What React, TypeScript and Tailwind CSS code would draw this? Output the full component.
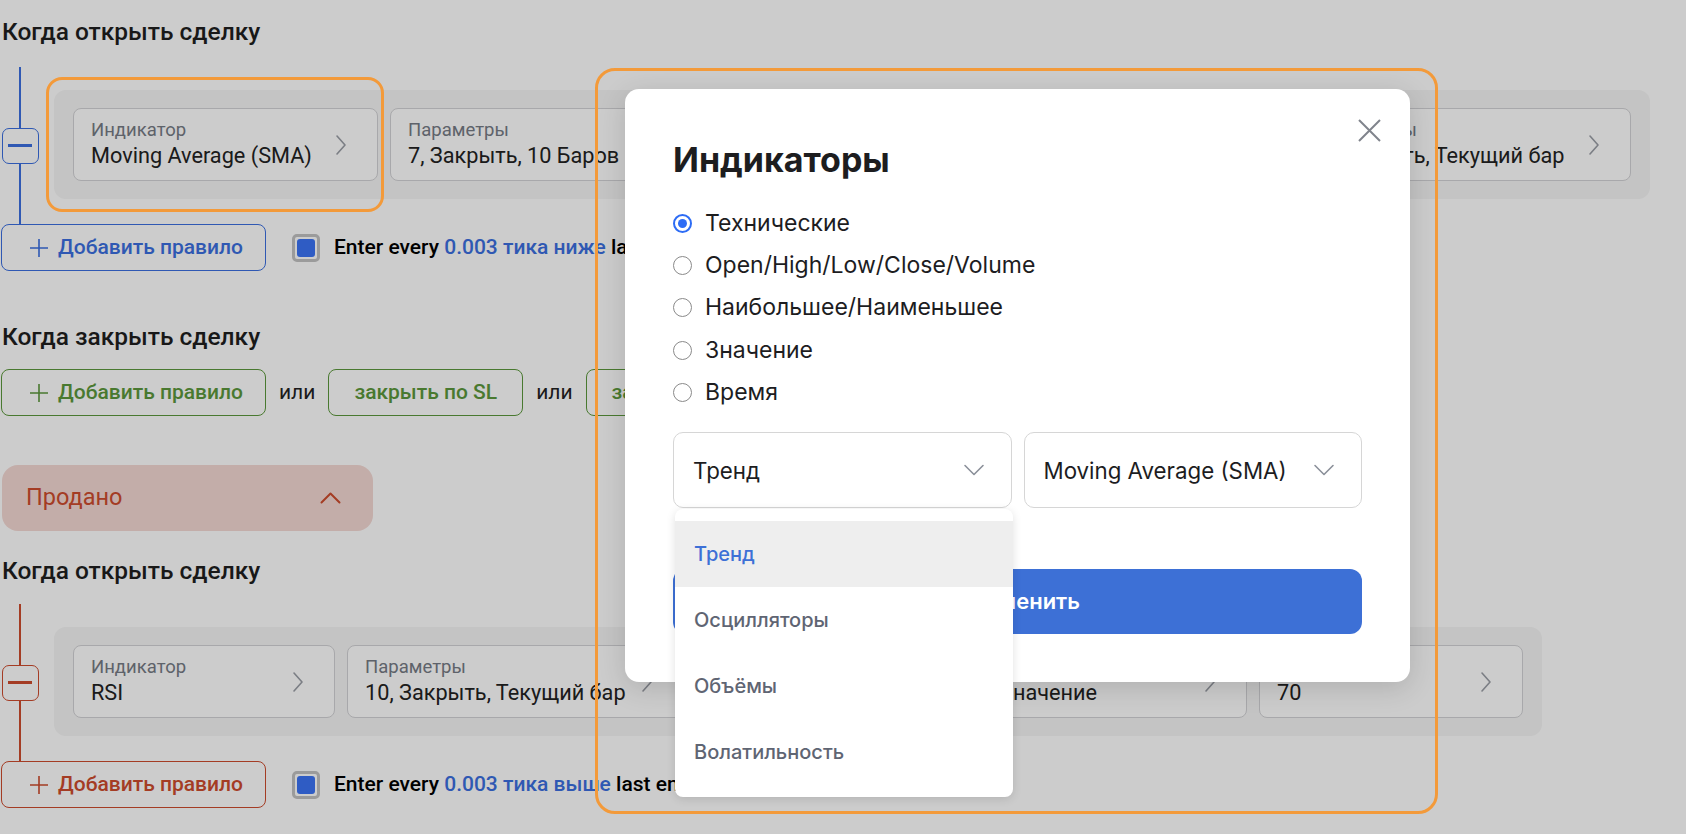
import React from "react";

type Card = { label: string; value: string; w: string };

const topCards: Card[] = [
  { label: "Индикатор", value: "Moving Average (SMA)", w: "w-[305px]" },
  { label: "Параметры", value: "7, Закрыть, 10 Баров", w: "w-[298px]" },
  { label: "Условие", value: "Пересекает вверх", w: "w-[284px]" },
  { label: "Индикатор", value: "Moving Average (SMA)", w: "w-[290px]" },
  { label: "Параметры", value: "7, Закрыть, Текущий бар", w: "w-[333px]" },
];

const bottomCards: Card[] = [
  { label: "Индикатор", value: "RSI", w: "w-[262px]" },
  { label: "Параметры", value: "10, Закрыть, Текущий бар", w: "w-[337px]" },
  { label: "Условие", value: "Больше чем", w: "w-[274px]" },
  { label: "Сравнить с", value: "Значение", w: "w-[265px]" },
  { label: "Значение", value: "70", w: "w-[264px]" },
];

const tones = {
  blue: {
    line: "bg-[#3b6fe0]",
    border: "border-[#3b6fe0]",
    text: "text-[#3b6fe0]",
    stroke: "#3b6fe0",
  },
  red: {
    line: "bg-[#cd4b2d]",
    border: "border-[#cd4b2d]",
    text: "text-[#cd4b2d]",
    stroke: "#cd4b2d",
  },
  green: {
    line: "bg-[#5c983c]",
    border: "border-[#5c983c]",
    text: "text-[#5c983c]",
    stroke: "#5c983c",
  },
};

type Tone = keyof typeof tones;

function ChevronRight() {
  return (
    <svg width="12" height="22" viewBox="0 0 12 22" fill="none" className="shrink-0">
      <path d="M2 2l8 9-8 9" stroke="#9a9ea6" strokeWidth="1.6" strokeLinecap="round" strokeLinejoin="round" />
    </svg>
  );
}

function Plus({ color }: { color: string }) {
  return (
    <svg width="20" height="20" viewBox="0 0 20 20" fill="none">
      <path d="M10 1v18M1 10h18" stroke={color} strokeWidth="1.6" />
    </svg>
  );
}

function RuleCard({ card }: { card: Card }) {
  return (
    <div
      className={`${card.w} flex h-[73px] shrink-0 items-center justify-between gap-[8px] rounded-[8px] border border-[#d3d3d6] bg-white pr-[30px] pl-[17px]`}
    >
      <div className="flex min-w-0 flex-col gap-[3px]">
        <span className="overflow-hidden text-[18.5px] leading-[20px] whitespace-nowrap text-[#767b85]">{card.label}</span>
        <span className="overflow-hidden text-[21.7px] leading-[26px] whitespace-nowrap text-[#222]">{card.value}</span>
      </div>
      <ChevronRight />
    </div>
  );
}

function RuleBlock({ tone, cards }: { tone: Tone; cards: Card[] }) {
  const t = tones[tone];
  return (
    <div className="flex items-stretch">
      <div className="flex w-[38px] shrink-0 flex-col items-center">
        <div className={`w-[2px] flex-1 ${t.line}`} />
        <div className={`flex h-[36px] w-[37px] items-center justify-center rounded-[7px] border ${t.border} bg-white`}>
          <div className={`h-[3px] w-[24px] ${t.line}`} />
        </div>
        <div className={`w-[2px] flex-1 ${t.line}`} />
      </div>
      <div className="ml-[15px] pt-[23px] pb-[25px]">
        <div className="flex gap-[12px] rounded-[12px] bg-[#f5f5f5] px-[19px] py-[18px]">
          {cards.map((c, i) => (
            <RuleCard key={i} card={c} />
          ))}
        </div>
      </div>
    </div>
  );
}

function AddButton({ tone }: { tone: Tone }) {
  const t = tones[tone];
  return (
    <button
      type="button"
      className={`flex h-[47px] w-[265px] shrink-0 items-center gap-[9px] rounded-[8px] border ${t.border} bg-white pl-[27px] text-[21px] font-medium ${t.text}`}
    >
      <Plus color={t.stroke} />
      Добавить правило
    </button>
  );
}

function AddRow({ tone, dir }: { tone: Tone; dir: string }) {
  return (
    <div className="flex h-[47px] items-center">
      <AddButton tone={tone} />
      <div className="ml-[26px] flex h-[28px] w-[28px] items-center justify-center rounded-[5px] border-[3px] border-[#c2c2c2] bg-white">
        <div className="h-[18px] w-[18px] rounded-[3px] bg-[#3b74f5]" />
      </div>
      <p className="ml-[14px] text-[21px] font-medium whitespace-nowrap text-black">
        Enter every <span className="text-[#3b6fe0]">0.003 тика {dir}</span> last entry price
      </p>
    </div>
  );
}

function Title({ children, className = "" }: { children: React.ReactNode; className?: string }) {
  return <h2 className={`pl-[1px] text-[24.5px] leading-[30px] font-medium text-[#1f1f1f] ${className}`}>{children}</h2>;
}

function Radio({ label, checked }: { label: string; checked?: boolean }) {
  return (
    <label className="flex h-[42.3px] items-center gap-[13px]">
      {checked ? (
        <span className="flex h-[19px] w-[19px] items-center justify-center rounded-full border-[2px] border-[#2d6cf5] bg-white">
          <span className="h-[9px] w-[9px] rounded-full bg-[#2d6cf5]" />
        </span>
      ) : (
        <span className="h-[19px] w-[19px] rounded-full border-[1.5px] border-[#8a8a8a] bg-white" />
      )}
      <span className="text-[23px] text-[#1d1d1f]">{label}</span>
    </label>
  );
}

function ChevronDown() {
  return (
    <svg width="22" height="12" viewBox="0 0 22 12" fill="none">
      <path d="M2 1.5l9 9 9-9" stroke="#8b909a" strokeWidth="1.6" strokeLinecap="round" strokeLinejoin="round" />
    </svg>
  );
}

function Select({ value }: { value: string }) {
  return (
    <div className="flex h-[76px] items-center justify-between rounded-[10px] border border-[#d6d6d6] bg-white pr-[26px] pl-[19px]">
      <span className="text-[22.3px] text-[#1d1d1f]">{value}</span>
      <ChevronDown />
    </div>
  );
}

const groups = ["Тренд", "Осцилляторы", "Объёмы", "Волатильность"];

function IndicatorModal() {
  return (
    <div className="absolute top-[89px] left-[625px] w-[785px] rounded-[14px] bg-white px-[48px] pt-[51px] pb-[48px] font-['Inter',sans-serif] shadow-[0_6px_28px_rgba(0,0,0,0.14)]">
      <button type="button" className="absolute top-[30px] right-[29px]">
        <svg width="23" height="23" viewBox="0 0 23 23" fill="none">
          <path d="M1 1l21 21M22 1L1 22" stroke="#80848c" strokeWidth="2" />
        </svg>
      </button>
      <h1 className="text-[34px] leading-[40px] font-bold text-[#1d1d1f]">Индикаторы</h1>
      <div className="mt-[22px] flex flex-col">
        <Radio label="Технические" checked />
        <Radio label="Open/High/Low/Close/Volume" />
        <Radio label="Наибольшее/Наименьшее" />
        <Radio label="Значение" />
        <Radio label="Время" />
      </div>
      <div className="mt-[19px] grid grid-cols-2 gap-[12px]">
        <div className="relative">
          <Select value="Тренд" />
          <div className="absolute top-full left-[2px] z-10 mt-[1px] w-[338px] rounded-[8px] bg-white py-[12px] shadow-[0_2px_10px_rgba(0,0,0,0.12)]">
            {groups.map((g, i) => (
              <div
                key={g}
                className={`flex h-[66px] items-center px-[19px] text-[20px] font-medium ${
                  i === 0 ? "bg-[#eeeeee] text-[#3d70d6]" : "text-[#5f6573]"
                }`}
              >
                {g}
              </div>
            ))}
          </div>
        </div>
        <Select value="Moving Average (SMA)" />
      </div>
      <button
        type="button"
        className="mt-[61px] flex h-[65px] w-full items-center justify-center rounded-[12px] bg-[#3d70d6] text-[22px] font-semibold text-white"
      >
        Применить
      </button>
    </div>
  );
}

export default function App() {
  return (
    <div className="relative h-screen w-full overflow-hidden bg-white font-['Roboto',sans-serif] text-[#222]">
      <div className="pt-[17px] pl-[1px]">
        <Title>Когда открыть сделку</Title>
        <div className="mt-[20px]">
          <RuleBlock tone="blue" cards={topCards} />
        </div>
        <AddRow tone="blue" dir="ниже" />

        <Title className="mt-[51px]">Когда закрыть сделку</Title>
        <div className="mt-[17px] flex items-center gap-[13px] text-[21px]">
          <AddButton tone="green" />
          <span className="text-[#222]">или</span>
          <button
            type="button"
            className="flex h-[47px] items-center rounded-[8px] border border-[#5c983c] bg-white px-[25px] font-medium text-[#5c983c]"
          >
            закрыть по SL
          </button>
          <span className="text-[#222]">или</span>
          <button
            type="button"
            className="flex h-[47px] items-center rounded-[8px] border border-[#5c983c] bg-white px-[25px] font-medium text-[#5c983c]"
          >
            закрыть по TP
          </button>
        </div>

        <div className="mt-[49px] ml-[1px] flex h-[66px] w-[371px] items-center justify-between rounded-[16px] bg-[#f4d9d4] pr-[32px] pl-[24px]">
          <span className="text-[23.5px] text-[#cd4b2d]">Продано</span>
          <svg width="21" height="12" viewBox="0 0 21 12" fill="none">
            <path d="M1.5 10.5l9-9 9 9" stroke="#cd4b2d" strokeWidth="2" strokeLinecap="round" strokeLinejoin="round" />
          </svg>
        </div>

        <Title className="mt-[25px]">Когда открыть сделку</Title>
        <div className="mt-[18px]">
          <RuleBlock tone="red" cards={bottomCards} />
        </div>
        <AddRow tone="red" dir="выше" />
      </div>

      <div className="absolute inset-0 bg-black/20" />
      <IndicatorModal />

      <div className="pointer-events-none absolute top-[77px] left-[46px] h-[135px] w-[338px] rounded-[16px] border-[3px] border-[#f39a3a]" />
      <div className="pointer-events-none absolute top-[68px] left-[595px] h-[746px] w-[843px] rounded-[20px] border-[3px] border-[#f39a3a]" />
    </div>
  );
}
